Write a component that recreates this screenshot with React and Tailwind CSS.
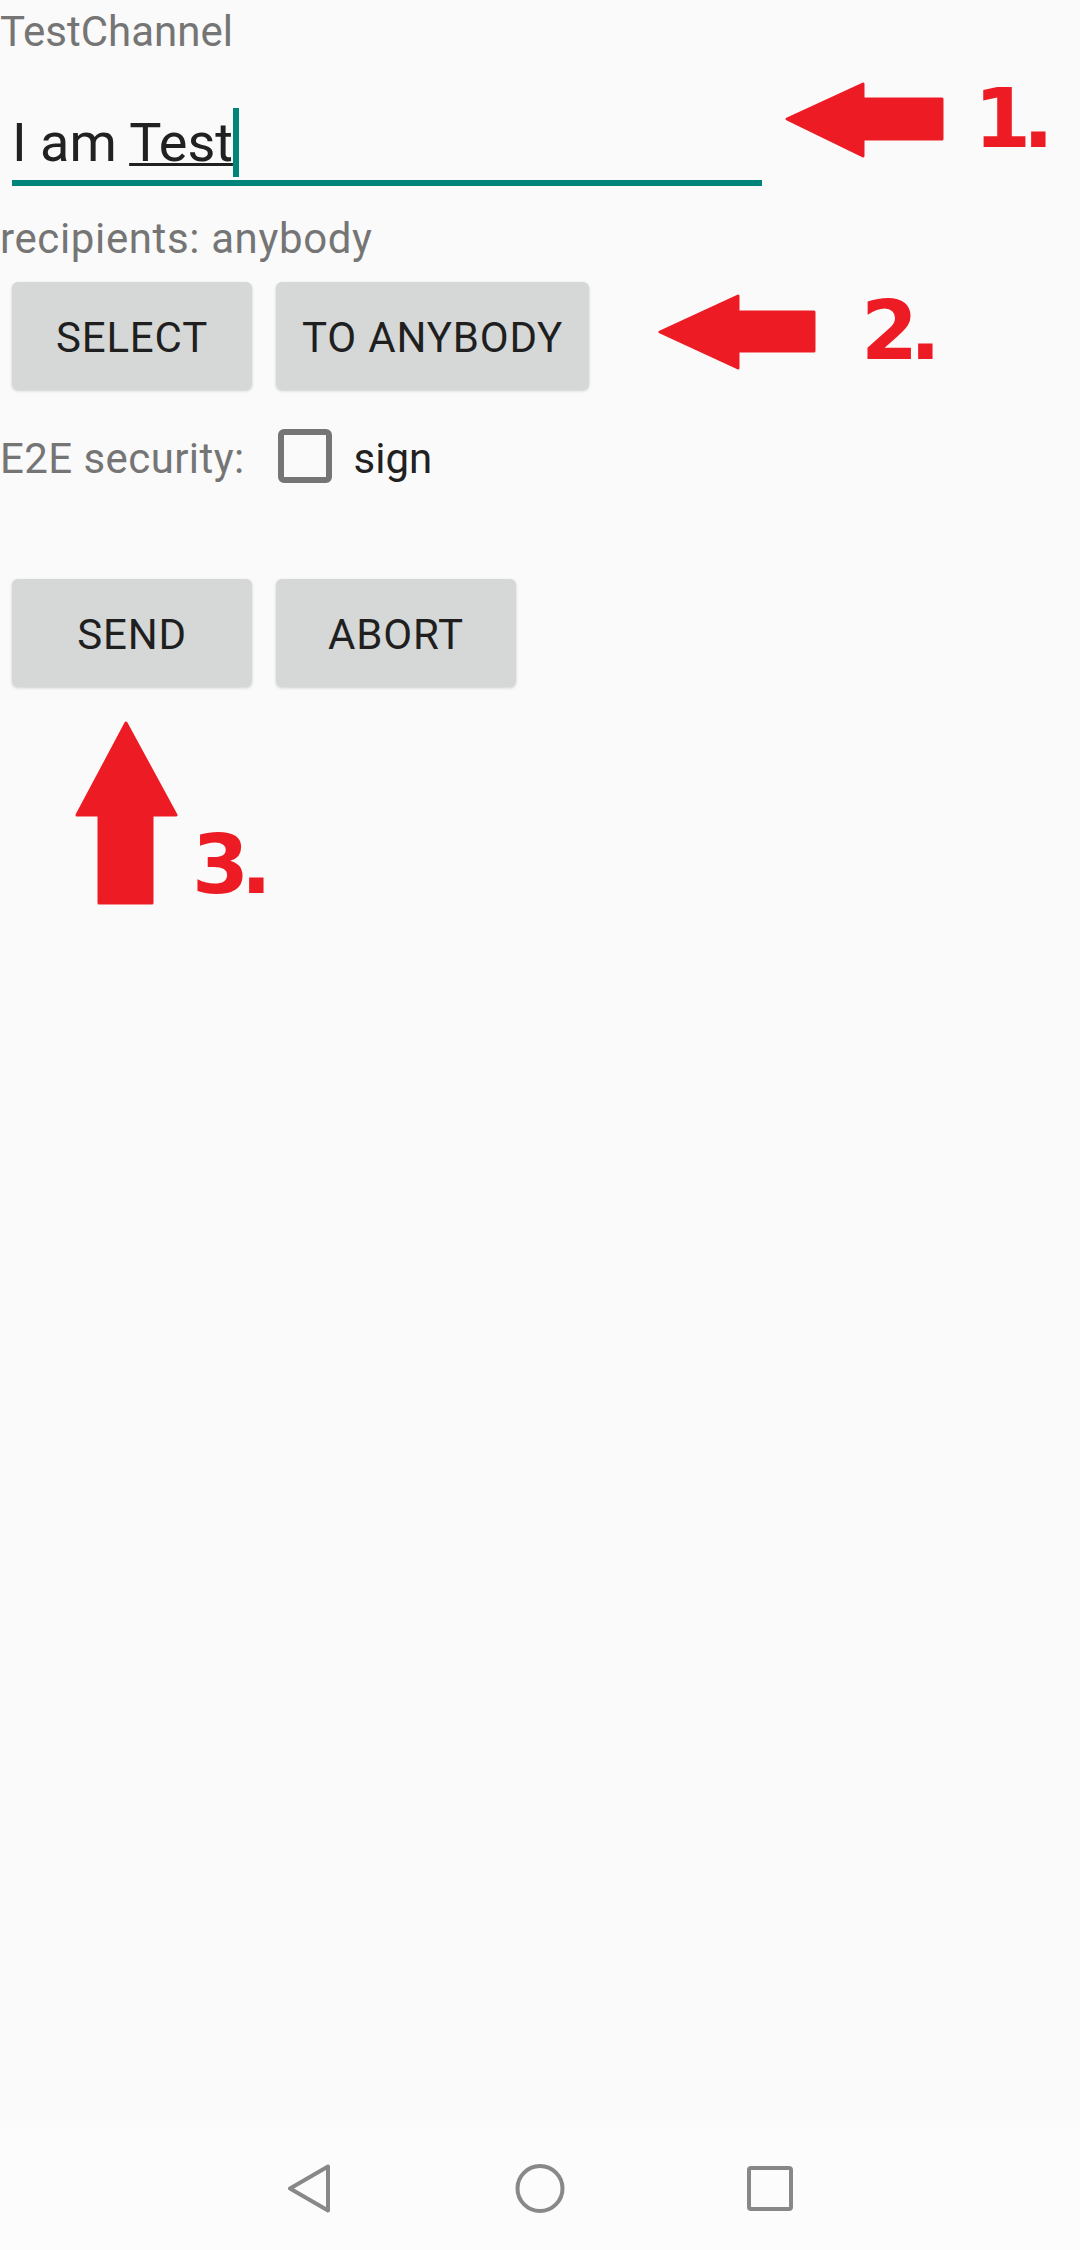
import React from "react";

const ActionButton = ({ children }) => (
  <button
    type="button"
    className="h-[108px] min-w-[240px] px-[26px] pt-[3px] flex items-center justify-center rounded-[6px] bg-[#d6d7d7] shadow-[0_1px_3px_rgba(0,0,0,0.18)] text-[42px] leading-[49px] tracking-[0.02em] text-[#1f1f1f]"
  >
    {children}
  </button>
);

const NavBar = () => (
  <div className="h-[123px] bg-[#fcfcfc] flex items-center justify-center gap-[180px]">
    <svg width="50" height="50" viewBox="0 0 50 50">
      <path
        d="M5 24.5 L43 2.5 L43 46.5 Z"
        fill="none"
        stroke="#888888"
        strokeWidth="4"
        strokeLinejoin="round"
      />
    </svg>
    <svg width="50" height="50" viewBox="0 0 50 50">
      <circle cx="25" cy="24.5" r="22.5" fill="none" stroke="#888888" strokeWidth="4" />
    </svg>
    <svg width="50" height="50" viewBox="0 0 50 50">
      <rect x="4" y="4" width="42" height="41" rx="2" fill="none" stroke="#888888" strokeWidth="4" />
    </svg>
  </div>
);

// red annotation arrows drawn over the screen
const Annotations = () => (
  <>
    <svg
      className="absolute left-0 top-0 pointer-events-none"
      width="1080"
      height="2250"
      viewBox="0 0 1080 2250"
    >
      <g fill="#ed1c24" stroke="#ed1c24" strokeWidth="3" strokeLinejoin="round">
        <path d="M787 119 L863 84 L863 99 L942 99 L942 139 L863 139 L863 156 Z" />
        <path d="M660 332 L738 296 L738 312 L814 312 L814 351 L738 351 L738 368 Z" />
        <path d="M126 723 L176 815 L152 815 L152 903 L99 903 L99 815 L77 815 Z" />
      </g>
    </svg>
    <div className="absolute left-[974px] top-[78px] text-[82px] leading-none font-bold tracking-[-0.1em] text-[#ed1c24] font-['DejaVu_Sans',sans-serif]">
      1.
    </div>
    <div className="absolute left-[861px] top-[290px] text-[82px] leading-none font-bold tracking-[-0.1em] text-[#ed1c24] font-['DejaVu_Sans',sans-serif]">
      2.
    </div>
    <div className="absolute left-[192px] top-[824px] text-[82px] leading-none font-bold tracking-[-0.1em] text-[#ed1c24] font-['DejaVu_Sans',sans-serif]">
      3.
    </div>
  </>
);

export default function App() {
  return (
    <div className="relative w-[1080px] h-[2250px] bg-[#fafafa] flex flex-col font-['Roboto',sans-serif]">
      <div className="flex-1 flex flex-col items-start">
        <p className="mt-[7px] text-[42px] leading-[49px] text-[#757575]">TestChannel</p>

        {/* message input */}
        <div className="mt-[55px] w-[774px] px-[12px]">
          <p className="text-[54px] leading-[63px] text-[#212121] whitespace-pre">
            I am{" "}
            <span className="relative underline decoration-[3px] underline-offset-[2px] decoration-[#212121]">
              Test
              <span className="absolute left-full top-[-3px] w-[6px] h-[69px] bg-[#00857a]" />
            </span>
          </p>
          <div className="mt-[6px] h-[6px] bg-[#00857a]" />
        </div>

        <p className="mt-[28px] text-[42px] leading-[49px] tracking-[0.015em] text-[#757575]">
          recipients: anybody
        </p>

        <div className="mt-[19px] ml-[12px] flex gap-[24px]">
          <ActionButton>SELECT</ActionButton>
          <ActionButton>TO ANYBODY</ActionButton>
        </div>

        <div className="mt-[39px] h-[54px] flex items-end">
          <span className="text-[42px] leading-[49px] tracking-[0.01em] text-[#757575]">E2E security:</span>
          <span className="ml-[33px] w-[54px] h-[54px] rounded-[6px] border-[6px] border-[#757575]" />
          <span className="ml-[22px] text-[42px] leading-[49px] text-[#212121]">sign</span>
        </div>

        <div className="mt-[96px] ml-[12px] flex gap-[24px]">
          <ActionButton>SEND</ActionButton>
          <ActionButton>ABORT</ActionButton>
        </div>
      </div>

      <NavBar />
      <Annotations />
    </div>
  );
}
